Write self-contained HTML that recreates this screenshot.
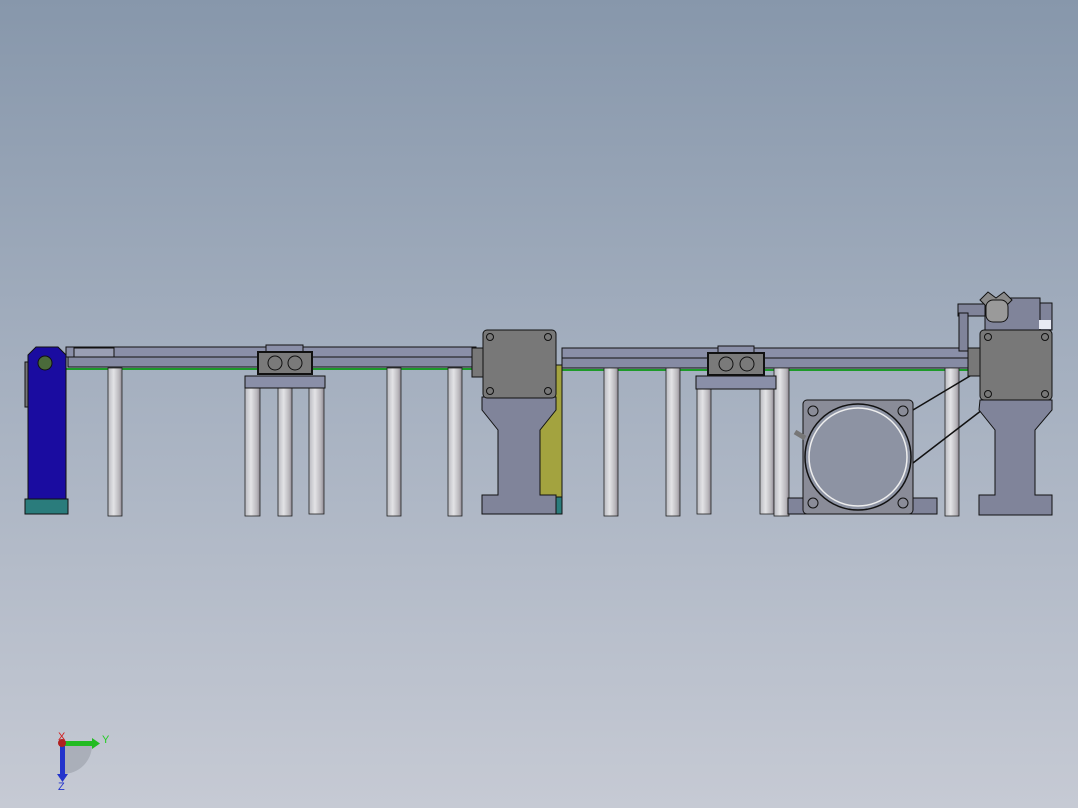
<!DOCTYPE html>
<html><head><style>
html,body{margin:0;padding:0;width:1078px;height:808px;overflow:hidden}
body{background:linear-gradient(#8797ab 0%,#a4afbf 45%,#c6cad4 100%)}
svg{position:absolute;left:0;top:0}
text{font-family:"Liberation Sans",sans-serif;font-size:11px}
</style></head><body>
<svg width="1078" height="808" viewBox="0 0 1078 808">
<defs>
<linearGradient id="post" x1="0" x2="1">
<stop offset="0" stop-color="#b9bac0"/><stop offset=".4" stop-color="#e3e3e6"/><stop offset=".8" stop-color="#b8b6bb"/><stop offset="1" stop-color="#8e8892"/>
</linearGradient>
</defs>
<g stroke="#111" stroke-width="1">
<!-- beams -->
<rect x="66" y="347" width="410" height="10" fill="#8a8fa8"/>
<rect x="68" y="357" width="408" height="10" fill="#868ba4"/>
<rect x="562" y="348" width="416" height="10" fill="#8a8fa8"/>
<rect x="562" y="358" width="416" height="10" fill="#868ba4"/>
<rect x="74" y="348" width="40" height="9" fill="#9a9fb4"/>
</g>
<line x1="64" y1="369" x2="480" y2="369" stroke="#1d9a2a" stroke-width="2"/>
<line x1="562" y1="370" x2="976" y2="370" stroke="#1d9a2a" stroke-width="2"/>
<g stroke="#222" stroke-width="0.8" fill="url(#post)">
<rect x="108" y="368" width="14" height="148"/>
<rect x="245" y="386" width="15" height="130"/>
<rect x="278" y="386" width="14" height="130"/>
<rect x="309" y="386" width="15" height="128"/>
<rect x="387" y="368" width="14" height="148"/>
<rect x="448" y="368" width="14" height="148"/>
<rect x="604" y="368" width="14" height="148"/>
<rect x="666" y="368" width="14" height="148"/>
<rect x="697" y="386" width="14" height="128"/>
<rect x="760" y="386" width="14" height="128"/>
<rect x="774" y="368" width="15" height="148"/>
<rect x="945" y="368" width="14" height="148"/>
</g>
<g stroke="#111" stroke-width="1">
<!-- blue arm -->
<path d="M28 355 L36 347 L58 347 L66 355 L66 500 L28 500 Z" fill="#1a0ca0"/>
<rect x="25" y="362" width="3" height="45" fill="#777"/>
<circle cx="45" cy="363" r="7" fill="#4a6a3a"/>
<rect x="25" y="499" width="43" height="15" fill="#2a7c7c"/>
<!-- block1 -->
<rect x="245" y="376" width="80" height="12" fill="#8a8fa8"/>
<rect x="266" y="345" width="37" height="8" fill="#8a8fa8"/>
<rect x="258" y="352" width="54" height="22" fill="#7a7a7a" stroke-width="2"/>
<circle cx="275" cy="363" r="7" fill="none"/><circle cx="295" cy="363" r="7" fill="none"/>
<!-- block2 -->
<rect x="696" y="376" width="80" height="13" fill="#8a8fa8"/>
<rect x="718" y="346" width="36" height="8" fill="#8a8fa8"/>
<rect x="708" y="353" width="56" height="22" fill="#7a7a7a" stroke-width="2"/>
<circle cx="726" cy="364" r="7" fill="none"/><circle cx="747" cy="364" r="7" fill="none"/>
<!-- yellow plate -->
<path d="M548 365 L562 365 L562 497 L537 497 L537 430 L548 418 Z" fill="#a3a33f"/>
<rect x="556" y="497" width="6" height="17" fill="#2a7c7c"/>
<!-- housing 1 -->
<path d="M482 397 L556 397 L556 410 L540 430 L540 495 L556 495 L556 514 L482 514 L482 495 L498 495 L498 430 L482 410 Z" fill="#80849a"/>
<rect x="472" y="348" width="14" height="29" fill="#787878"/>
<rect x="483" y="330" width="73" height="68" rx="4" fill="#787878"/>
<!-- motor -->
<rect x="788" y="498" width="149" height="16" fill="#80849a"/>
<rect x="803" y="400" width="110" height="114" rx="4" fill="#8a8c98"/>
<circle cx="858" cy="457" r="53" fill="#8d93a3" stroke-width="1.5"/>
<circle cx="858" cy="457" r="49" fill="none" stroke="#eee" stroke-width="1.5"/>
<path d="M795 432 L805 438" stroke="#777" stroke-width="5"/>
<!-- belts -->
<line x1="913" y1="410" x2="980" y2="370" stroke-width="1.5"/>
<line x1="913" y1="463" x2="982" y2="410" stroke-width="1.5"/>
<!-- housing 2 -->
<path d="M980 400 L1052 400 L1052 410 L1035 430 L1035 495 L1052 495 L1052 515 L979 515 L979 495 L995 495 L995 430 L979 410 Z" fill="#80849a"/>
<rect x="958" y="304" width="30" height="12" fill="#80849a"/>
<rect x="959" y="313" width="9" height="38" fill="#80849a"/>
<rect x="985" y="298" width="55" height="32" fill="#80849a"/>
<rect x="1040" y="303" width="12" height="27" fill="#80849a"/>
<rect x="1039" y="320" width="12" height="9" fill="#e8eaf4" stroke="none"/>
<path d="M980 300 L988 292 L996 298 L1004 292 L1012 300 L1004 308 L988 308 Z" fill="#8a8a8a"/>
<rect x="986" y="300" width="22" height="22" rx="7" fill="#9a9a9a"/>
<rect x="968" y="348" width="12" height="28" fill="#787878"/>
<rect x="980" y="330" width="72" height="70" rx="4" fill="#787878"/>
</g>
<g fill="none" stroke="#111" stroke-width="1">
<circle cx="490" cy="337" r="3.5"/><circle cx="548" cy="337" r="3.5"/><circle cx="490" cy="391" r="3.5"/><circle cx="548" cy="391" r="3.5"/>
<circle cx="988" cy="337" r="3.5"/><circle cx="1045" cy="337" r="3.5"/><circle cx="988" cy="394" r="3.5"/><circle cx="1045" cy="394" r="3.5"/>
<circle cx="813" cy="411" r="5"/><circle cx="903" cy="411" r="5"/><circle cx="813" cy="503" r="5"/><circle cx="903" cy="503" r="5"/>
</g>
<!-- triad -->
<path d="M63 745 L92 745 A29 29 0 0 1 63 774 Z" fill="#9a9ea8" opacity=".6"/>
<rect x="60" y="744" width="5" height="30" fill="#2233cc"/>
<path d="M57 774 L68 774 L62.5 782 Z" fill="#2233cc"/>
<rect x="63" y="741" width="30" height="5" fill="#22bb22"/>
<path d="M92 738 L100 743.5 L92 749 Z" fill="#22bb22"/>
<circle cx="62" cy="743" r="4" fill="#b02020"/>
<text x="58" y="740" fill="#d02020" font-size="9">X</text>
<text x="102" y="743" fill="#22cc22">Y</text>
<text x="58" y="790" fill="#2233cc">Z</text>
</svg>
</body></html>
